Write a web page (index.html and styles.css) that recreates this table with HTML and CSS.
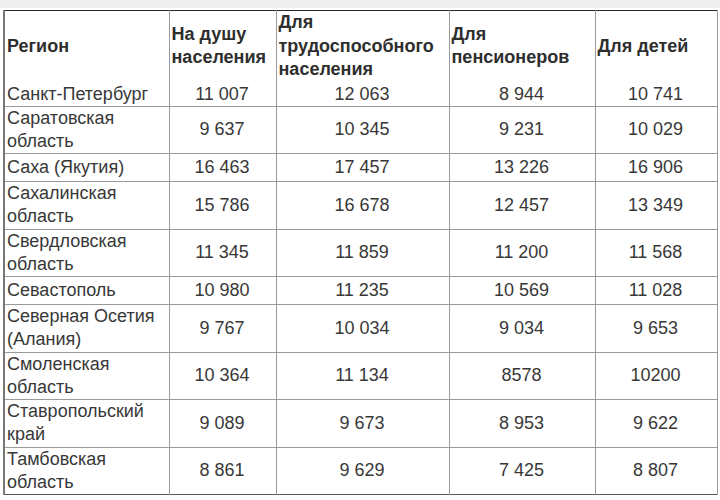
FILE: index.html
```html
<!DOCTYPE html>
<html lang="ru">
<head>
<meta charset="utf-8">
<link rel="stylesheet" href="styles.css">
</head>
<body>
<div class="strip"></div>
<div class="wrap">
<table class="tbl">
<colgroup>
<col class="c0"><col class="c1"><col class="c2"><col class="c3"><col class="c4">
</colgroup>
<thead>
<tr class="head">
<th>Регион</th>
<th>На душу населения</th>
<th>Для трудоспособного населения</th>
<th>Для пенсионеров</th>
<th>Для детей</th>
</tr>
</thead>
<tbody>
<tr class="first"><td>Санкт-Петербург</td><td>11 007</td><td>12 063</td><td>8 944</td><td>10 741</td></tr>
<tr class="two"><td>Саратовская область</td><td>9 637</td><td>10 345</td><td>9 231</td><td>10 029</td></tr>
<tr class="one"><td>Саха (Якутия)</td><td>16 463</td><td>17 457</td><td>13 226</td><td>16 906</td></tr>
<tr class="two"><td>Сахалинская область</td><td>15 786</td><td>16 678</td><td>12 457</td><td>13 349</td></tr>
<tr class="two"><td>Свердловская область</td><td>11 345</td><td>11 859</td><td>11 200</td><td>11 568</td></tr>
<tr class="one"><td>Севастополь</td><td>10 980</td><td>11 235</td><td>10 569</td><td>11 028</td></tr>
<tr class="two"><td>Северная Осетия (Алания)</td><td>9 767</td><td>10 034</td><td>9 034</td><td>9 653</td></tr>
<tr class="two"><td>Смоленская область</td><td>10 364</td><td>11 134</td><td>8578</td><td>10200</td></tr>
<tr class="two"><td>Ставропольский край</td><td>9 089</td><td>9 673</td><td>8 953</td><td>9 622</td></tr>
<tr class="two"><td>Тамбовская область</td><td>8 861</td><td>9 629</td><td>7 425</td><td>8 807</td></tr>
</tbody>
</table>
</div>
</body>
</html>
```
FILE: styles.css
```css
html, body {
  margin: 0;
  padding: 0;
  background: #ffffff;
}
.strip {
  height: 8px;
  background: #efefef;
}
.wrap {
  padding: 2px 0 0 3px;
}
.tbl {
  border-collapse: collapse;
  table-layout: fixed;
  width: 714px;
  font-family: "Liberation Sans", Arial, sans-serif;
  font-size: 18px;
  color: #383838;
  border-top: 1px solid #2a2a2a;
  border-left: 2px solid #777777;
  border-right: 1px solid #555555;
  border-bottom: 1px solid #555555;
}
.c0 { width: 165px; }
.c1 { width: 107px; }
.c2 { width: 173px; }
.c3 { width: 146px; }
.c4 { width: 122px; }
.tbl th,
.tbl td {
  padding: 0 3px 0 2px;
  border-left: 1px solid #9a9a9a;
  border-right: 1px solid #9a9a9a;
  vertical-align: middle;
  overflow: hidden;
}
.tbl th {
  font-weight: bold;
  text-align: left;
  line-height: 23.5px;
  color: #2e2e2e;
}
.tbl td {
  line-height: 23.25px;
  text-align: center;
  border-top: 1px solid #9a9a9a;
}
.tbl td:first-child {
  text-align: left;
  padding-right: 10px;
}
.head { height: 70px; }
.tbl .first td { border-top: none; line-height: 24px; }
.one td { height: 27px; }
.two td { height: 46px; }
```
